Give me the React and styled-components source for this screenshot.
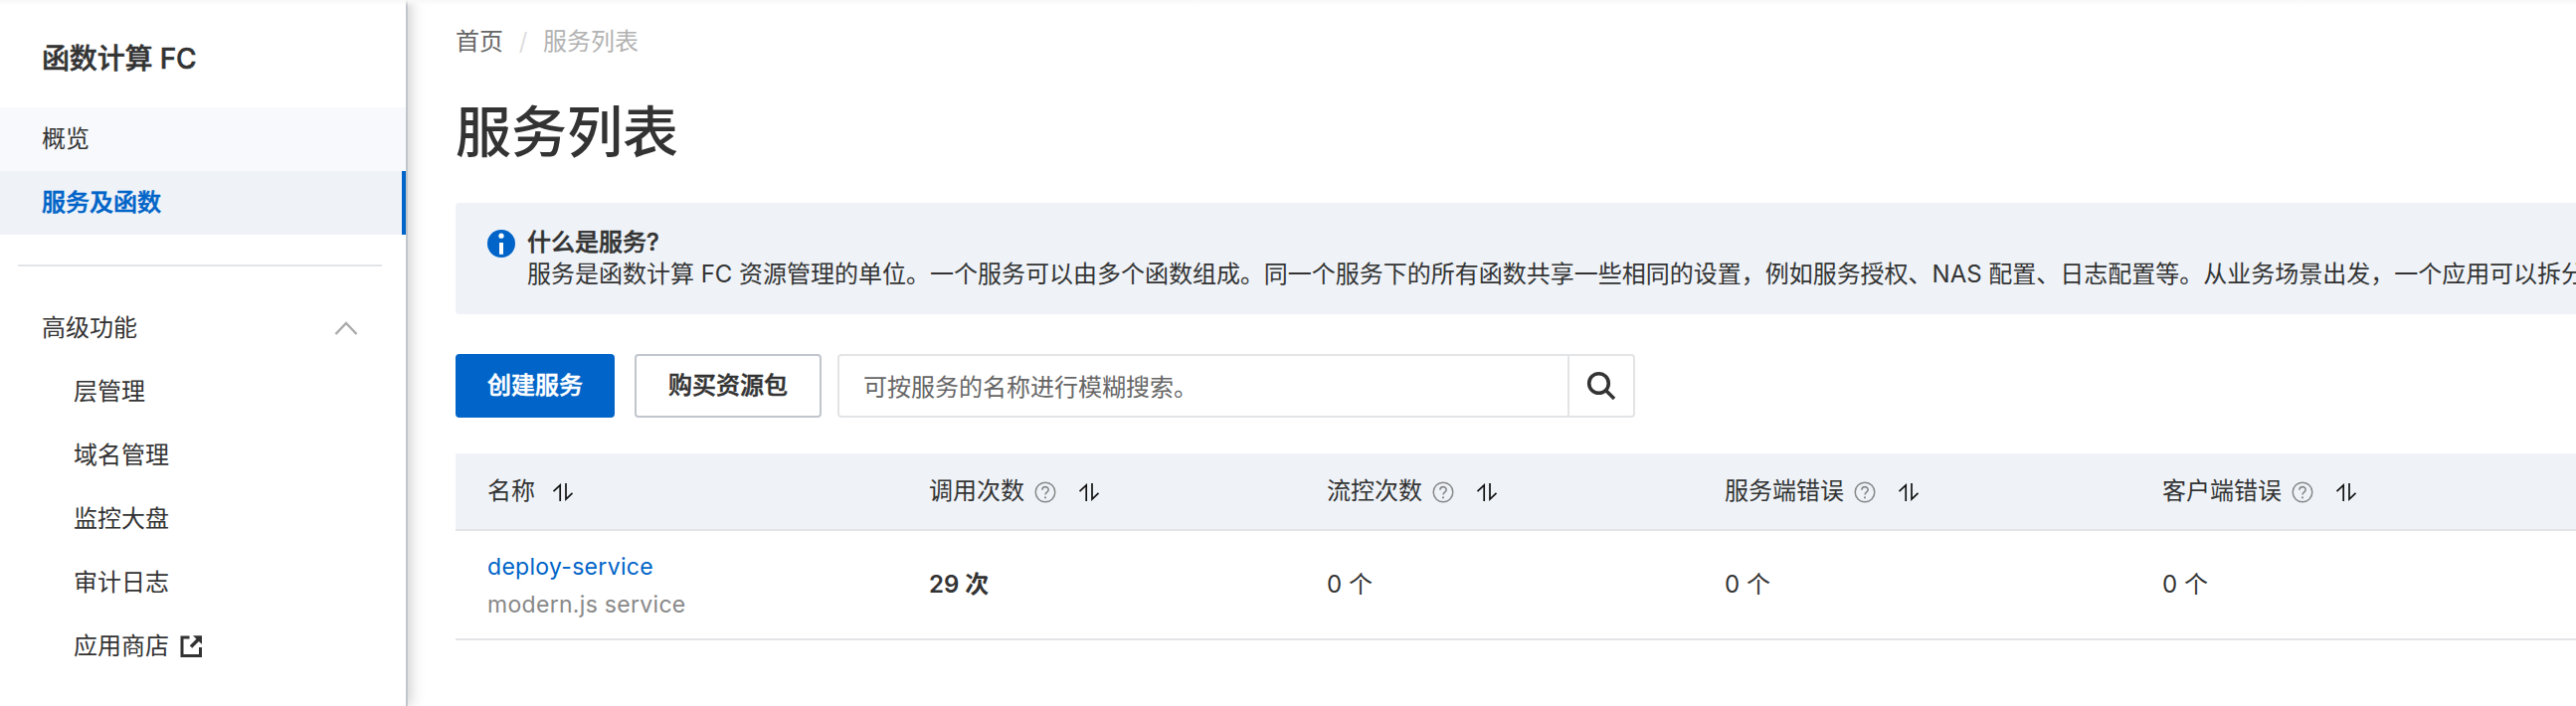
import React from 'react';
import styled, { createGlobalStyle, css } from 'styled-components';

const GlobalStyle = createGlobalStyle`
  * { box-sizing: border-box; }
  body {
    margin: 0;
    background: #fff;
    color: #333;
    font: 24px/32px Inter, 'Noto Sans CJK SC', sans-serif;
  }
  svg { display: block; flex: none; }
`;

const emphasis = css`
  font-weight: 500;
  -webkit-text-stroke: 0.5px currentColor;
`;

const Page = styled.div`
  display: flex;
  height: 710px;
  overflow: hidden;
  position: relative;
  &::before {
    content: '';
    position: absolute;
    inset: 0 0 auto 0;
    height: 6px;
    background: linear-gradient(#f8f8f8, rgba(255, 255, 255, 0));
  }
`;

const Sidebar = styled.nav`
  flex: none;
  width: 410px;
  border-right: 2px solid #c0c6cc;
  box-shadow: 2px 0 14px rgba(0, 0, 0, 0.22);
`;

const Product = styled.div`
  height: 108px;
  padding: 39px 0 0 42px;
  font-size: 28px;
  line-height: 40px;
  letter-spacing: -0.15px;
  ${emphasis}
`;

const NavItem = styled.a`
  display: flex;
  align-items: center;
  height: 64px;
  padding-left: ${(p) => (p.$nested ? 74 : 42)}px;
  background: ${(p) => (p.$active ? '#eff3f8' : p.$hover ? '#f7f9fc' : 'transparent')};
  color: ${(p) => (p.$active ? '#0064c8' : '#333')};
  border-right: ${(p) => (p.$active ? '4px solid #0064c8' : '0')};
  ${(p) => p.$active && emphasis}
  svg { margin-left: 10px; }
`;

const Divider = styled.hr`
  height: 2px;
  margin: 30px 24px 30px 18px;
  border: 0;
  background: #e3e4e6;
`;

const GroupTitle = styled.div`
  display: flex;
  align-items: center;
  justify-content: space-between;
  height: 64px;
  padding: 0 48px 0 42px;
`;

const Main = styled.main`
  flex: 1;
  min-width: 0;
  padding-left: 48px;
`;

const Breadcrumb = styled.div`
  display: flex;
  height: 32px;
  margin-top: 26px;
  color: #b2b2b2;
`;

const CrumbLink = styled.a`
  color: #666;
`;

const Slash = styled.span`
  width: 40px;
  text-align: center;
  color: #ddd;
`;

const Title = styled.h1`
  margin: 35px 0 0;
  height: 111px;
  font-size: 56px;
  line-height: 80px;
  font-weight: 500;
`;

const Notice = styled.section`
  display: flex;
  height: 112px;
  padding: 24px 0 0 32px;
  border-radius: 4px 0 0 4px;
  background: #eff3f8;
  overflow: hidden;
  white-space: nowrap;
  svg { margin: 3px 12px 0 0; }
`;

const NoticeTitle = styled.div`
  ${emphasis}
`;

const NoticeText = styled.div`
  letter-spacing: -0.01px;
`;

const Toolbar = styled.div`
  display: flex;
  height: 64px;
  margin: 40px 0 36px;
`;

const Button = styled.button`
  height: 64px;
  width: ${(p) => (p.$primary ? 160 : 188)}px;
  margin-right: ${(p) => (p.$primary ? 20 : 16)}px;
  padding: 0;
  border: 2px solid ${(p) => (p.$primary ? '#0064c8' : '#c0c6cc')};
  border-radius: 4px;
  background: ${(p) => (p.$primary ? '#0064c8' : '#fff')};
  color: ${(p) => (p.$primary ? '#fff' : '#333')};
  font: inherit;
  ${emphasis}
`;

const Search = styled.div`
  display: flex;
  width: 802px;
  border: 2px solid #e3e4e6;
  border-radius: 4px;
`;

const SearchInput = styled.input`
  flex: 1;
  min-width: 0;
  padding: 4px 24px 0;
  border: 0;
  outline: 0;
  background: none;
  font: inherit;
  color: #333;
  &::placeholder { color: #666; opacity: 1; }
`;

const SearchButton = styled.div`
  display: flex;
  align-items: center;
  justify-content: center;
  width: 66px;
  border-left: 2px solid #e3e4e6;
`;

const Row = styled.div`
  display: grid;
  grid-template-columns: 444px 400px 400px 440px 1fr;
  align-items: center;
  height: ${(p) => (p.$head ? 78 : 110)}px;
  padding-left: 32px;
  border-bottom: 2px solid #e3e4e6;
  background: ${(p) => (p.$head ? '#eff3f8' : '#fff')};
`;

const HeadCell = styled.div`
  display: flex;
  align-items: center;
`;

const Value = styled.div`
  font-weight: ${(p) => (p.$strong ? 600 : 400)};
`;

const ServiceCell = styled.div`
  padding-top: 2px;
  font-size: 23px;
  line-height: 38px;
  letter-spacing: 0.3px;
`;

const ServiceLink = styled.a`
  display: block;
  color: #0064c8;
`;

const ServiceNote = styled.div`
  color: #888;
`;

const HelpSvg = styled.svg`
  margin: 2px 0 0 10px;
`;

const SortSvg = styled.svg`
  margin: 2px 0 0 ${(p) => (p.$wide ? 22 : 17)}px;
`;

const ChevronUp = () => (
  <svg width="24" height="16" viewBox="0 0 24 16" fill="none" stroke="#aaa" strokeWidth="2.4">
    <path d="M1.5 14 12 3l10.500 11" />
  </svg>
);

const External = () => (
  <svg width="24" height="24" viewBox="0 0 24 24" fill="none" stroke="#333" strokeWidth="3">
    <path d="M10.500 3H3v18.500h18.500V13" />
    <path d="M12 12.500 20 4.500" strokeWidth="3.400" />
    <path d="M14 1.200h9V10z" fill="#333" stroke="none" />
  </svg>
);

const Info = () => (
  <svg width="28" height="28" viewBox="0 0 28 28">
    <circle cx="14" cy="14" r="14" fill="#0064c8" />
    <circle cx="14" cy="6.200" r="2.600" fill="#fff" />
    <path d="M12 13h4v11.800h-4z" fill="#fff" />
  </svg>
);

const Magnifier = () => (
  <svg width="30" height="30" viewBox="0 0 30 30" fill="none" stroke="#333">
    <circle cx="12.500" cy="12.500" r="9.800" strokeWidth="3.600" />
    <path d="m20 20 8 8" strokeWidth="3.600" />
  </svg>
);

const Help = () => (
  <HelpSvg width="22" height="22" viewBox="0 0 22 22" fill="none" stroke="#888" strokeWidth="1.500">
    <circle cx="11" cy="11" r="9.800" />
    <path d="M7.900 8.800c0-4.200 6.300-4.200 6.300-.3 0 2.300-3.100 2.300-3.100 5" strokeWidth="1.600" />
    <path d="M10 15.400h2v1.900h-2z" fill="#888" stroke="none" />
  </HelpSvg>
);

const Sort = ({ wide }) => (
  <SortSvg $wide={wide} width="22" height="20" viewBox="0 0 22 20" fill="none" stroke="#111" strokeWidth="1.700">
    <path d="M1.500 9.200 8.200 3V19M14 1v16l6.500-6.200" />
  </SortSvg>
);

const advanced = ['层管理', '域名管理', '监控大盘', '审计日志'];
const metrics = ['调用次数', '流控次数', '服务端错误', '客户端错误'];

export default function App() {
  return (
    <>
      <GlobalStyle />
      <Page>
        <Sidebar>
          <Product>函数计算 FC</Product>
          <NavItem $hover>概览</NavItem>
          <NavItem $active>服务及函数</NavItem>
          <Divider />
          <GroupTitle>
            高级功能
            <ChevronUp />
          </GroupTitle>
          {advanced.map((label) => (
            <NavItem $nested key={label}>{label}</NavItem>
          ))}
          <NavItem $nested>
            应用商店
            <External />
          </NavItem>
        </Sidebar>
        <Main>
          <Breadcrumb>
            <CrumbLink>首页</CrumbLink>
            <Slash>/</Slash>
            <span>服务列表</span>
          </Breadcrumb>
          <Title>服务列表</Title>
          <Notice>
            <Info />
            <div>
              <NoticeTitle>什么是服务?</NoticeTitle>
              <NoticeText>
                服务是函数计算 FC 资源管理的单位。一个服务可以由多个函数组成。同一个服务下的所有函数共享一些相同的设置，例如服务授权、NAS 配置、日志配置等。从业务场景出发，一个应用可以拆分
              </NoticeText>
            </div>
          </Notice>
          <Toolbar>
            <Button $primary>创建服务</Button>
            <Button>购买资源包</Button>
            <Search>
              <SearchInput placeholder="可按服务的名称进行模糊搜索。" />
              <SearchButton>
                <Magnifier />
              </SearchButton>
            </Search>
          </Toolbar>
          <Row $head>
            <HeadCell>
              名称
              <Sort />
            </HeadCell>
            {metrics.map((label) => (
              <HeadCell key={label}>
                {label}
                <Help />
                <Sort wide />
              </HeadCell>
            ))}
          </Row>
          <Row>
            <ServiceCell>
              <ServiceLink>deploy-service</ServiceLink>
              <ServiceNote>modern.js service</ServiceNote>
            </ServiceCell>
            <Value $strong>29 次</Value>
            <Value>0 个</Value>
            <Value>0 个</Value>
            <Value>0 个</Value>
          </Row>
        </Main>
      </Page>
    </>
  );
}
